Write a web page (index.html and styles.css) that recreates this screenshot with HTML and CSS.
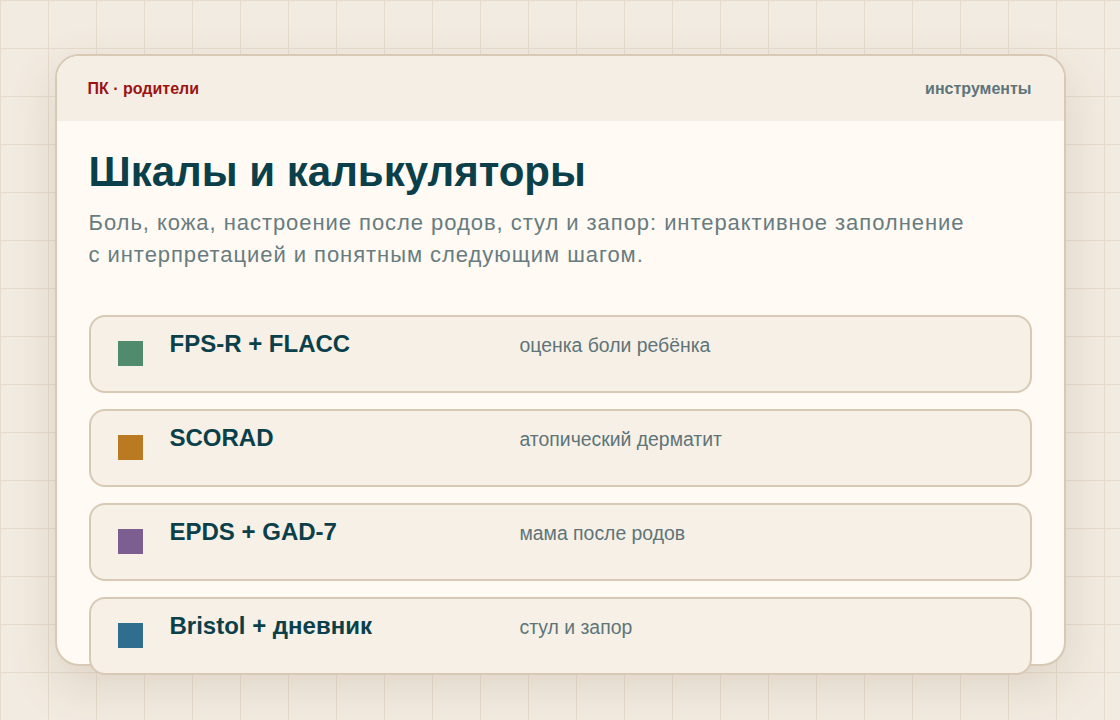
FILE: index.html
```html
<!DOCTYPE html>
<html lang="ru">
<head>
    <meta charset="UTF-8">
    <meta name="viewport" content="width=device-width, initial-scale=1.0">
    <title>Шкалы и калькуляторы</title>
    <link rel="stylesheet" href="styles.css">
</head>
<body>
    <div class="panel">
        <header class="panel-header">
            <span class="brand">ПК · родители</span>
            <span class="section">инструменты</span>
        </header>

        <main class="panel-body">
            <h1 class="page-title">Шкалы и калькуляторы</h1>
            <p class="page-lead">
                Боль, кожа, настроение после родов, стул и запор: интерактивное заполнение
                с интерпретацией и понятным следующим шагом.
            </p>

            <ul class="tool-list">
                <li class="tool-item">
                    <span class="tool-mark green"></span>
                    <span class="tool-name">FPS-R + FLACC</span>
                    <span class="tool-desc">оценка боли ребёнка</span>
                </li>
                <li class="tool-item">
                    <span class="tool-mark amber"></span>
                    <span class="tool-name">SCORAD</span>
                    <span class="tool-desc">атопический дерматит</span>
                </li>
                <li class="tool-item">
                    <span class="tool-mark violet"></span>
                    <span class="tool-name">EPDS + GAD-7</span>
                    <span class="tool-desc">мама после родов</span>
                </li>
                <li class="tool-item">
                    <span class="tool-mark blue"></span>
                    <span class="tool-name">Bristol + дневник</span>
                    <span class="tool-desc">стул и запор</span>
                </li>
            </ul>
        </main>
    </div>
</body>
</html>
```

FILE: styles.css
```css
* {
    margin: 0;
    padding: 0;
    box-sizing: border-box;
}

body {
    font-family: "Liberation Sans", Arial, sans-serif;
    background-color: #f2ebe1;
    background-image:
        linear-gradient(to right, #e6dbcc 1px, transparent 1px),
        linear-gradient(to bottom, #e6dbcc 1px, transparent 1px);
    background-size: 48px 48px;
    height: 100vh;
    overflow: hidden;
}

.panel {
    width: 1011px;
    height: 612px;
    margin: 54px auto 0;
    background: #fffaf3;
    border: 2px solid #d8c9b5;
    border-radius: 24px;
    box-shadow: 0 18px 48px rgba(110, 85, 50, 0.16);
}

.panel-header {
    display: flex;
    justify-content: space-between;
    align-items: center;
    height: 65px;
    padding: 0 32px 0 31px;
    background: #f5eee4;
    border-radius: 22px 22px 0 0;
    font-size: 16px;
    font-weight: 700;
}

.brand {
    color: #9b1414;
}

.section {
    color: #5f7479;
}

.panel-body {
    padding: 27px 32px 0;
}

.page-title {
    font-size: 42px;
    line-height: 48px;
    font-weight: 700;
    color: #0b404a;
}

.page-lead {
    margin-top: 11px;
    max-width: 885px;
    font-size: 22px;
    line-height: 32px;
    letter-spacing: 0.95px;
    color: #687c80;
}

.tool-list {
    list-style: none;
    margin-top: 44px;
    display: flex;
    flex-direction: column;
    gap: 16px;
}

.tool-item {
    display: grid;
    grid-template-columns: 25px 323px 1fr;
    column-gap: 27px;
    align-items: baseline;
    height: 78px;
    padding: 12px 27px 0;
    background: #f6f0e6;
    border: 2px solid #d8c9b5;
    border-radius: 16px;
}

.tool-mark {
    align-self: start;
    width: 25px;
    height: 25px;
    margin-top: 12px;
}

.tool-mark.green { background: #4f8b6c; }
.tool-mark.amber { background: #b97a22; }
.tool-mark.violet { background: #7d5e91; }
.tool-mark.blue { background: #2f6e8e; }

.tool-name {
    font-size: 24px;
    line-height: 29px;
    font-weight: 700;
    color: #0b404a;
}

.tool-desc {
    font-size: 19.4px;
    color: #5f7479;
}
```
